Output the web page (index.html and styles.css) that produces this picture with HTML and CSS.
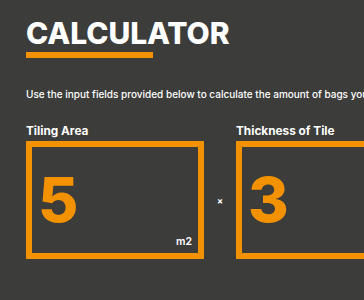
FILE: index.html
```html
<!DOCTYPE html>
<html lang="en">
<head>
    <meta charset="UTF-8">
    <meta name="viewport" content="width=device-width, initial-scale=1.0">
    <title>Calculator</title>
    <link rel="stylesheet" href="styles.css">
</head>
<body>
    <div class="calculator">
        <h1 class="title">CALCULATOR</h1>
        <div class="title-bar"></div>

        <p class="intro">Use the input fields provided below to calculate the amount of bags you will need for your project.</p>

        <div class="fields">
            <div class="field">
                <label class="field-label">Tiling Area</label>
                <div class="field-box">
                    <span class="field-value">5</span>
                    <span class="field-unit">m2</span>
                </div>
            </div>

            <div class="operator">×</div>

            <div class="field">
                <label class="field-label">Thickness of Tile</label>
                <div class="field-box">
                    <span class="field-value">3</span>
                    <span class="field-unit">mm</span>
                </div>
            </div>
        </div>
    </div>
</body>
</html>
```

FILE: styles.css
```css
body {
    margin: 0;
    background: #3c3c3b;
    color: #ffffff;
    font-family: Inter, 'Open Sans', sans-serif;
    overflow: hidden;
}

.calculator {
    padding: 15px 0 0 26px;
    width: 600px;
}

.title {
    margin: 0;
    font-size: 30px;
    font-weight: 800;
    line-height: 36px;
    letter-spacing: -0.1px;
}

.title-bar {
    width: 127px;
    height: 6px;
    background: #f39200;
    margin-top: 1px;
}

.intro {
    margin: 29px 0 0 0;
    font-size: 10px;
    font-weight: 500;
    line-height: 14px;
    white-space: nowrap;
}

.fields {
    display: flex;
    align-items: flex-end;
    margin-top: 22px;
}

.field {
    display: flex;
    flex-direction: column;
}

.field-label {
    font-size: 11.8px;
    font-weight: 700;
    line-height: 16px;
    margin-bottom: 2px;
}

.field-box {
    width: 154px;
    height: 106px;
    border: 6px solid #f39200;
    display: grid;
    grid-template-columns: 1fr auto;
    padding: 0 6px 0 6px;
}

.field-value {
    align-self: center;
    color: #f39200;
    font-size: 62px;
    font-weight: 800;
    line-height: 62px;
}

.field-unit {
    align-self: end;
    font-size: 10.5px;
    font-weight: 600;
    margin-bottom: 5px;
}

.operator {
    width: 32px;
    height: 118px;
    display: flex;
    align-items: center;
    justify-content: center;
    font-size: 9px;
    font-weight: 700;
}
```
